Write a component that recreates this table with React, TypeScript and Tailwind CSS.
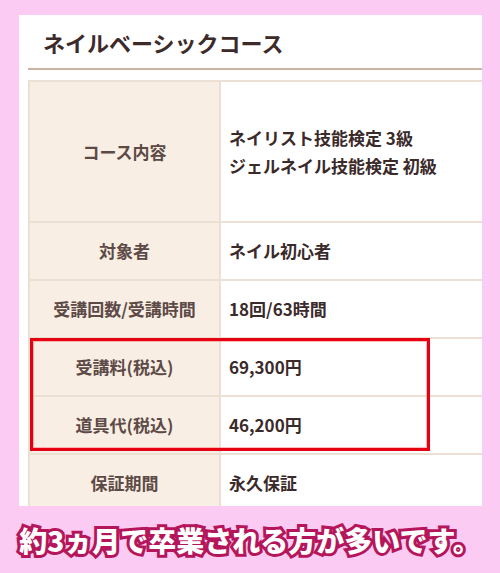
import React from 'react';

const rows = [
  { label: '対象者', value: 'ネイル初心者' },
  { label: '受講回数/受講時間', value: '18回/63時間' },
];

const priceRows = [
  { label: '受講料(税込)', value: '69,300円' },
  { label: '道具代(税込)', value: '46,200円' },
];

function Row({ label, value, h = 'h-[58px]' }: { label: string; value: React.ReactNode; h?: string }) {
  return (
    <div className={`grid grid-cols-[191px_1fr] border-t-2 border-[#ebe0d3] ${h}`}>
      <div className="flex items-center justify-center bg-[#f8eee3] border-r-2 border-[#ebe0d3] text-[17px] font-bold text-[#5d4a47]">
        {label}
      </div>
      <div className="flex items-center pl-[8px] text-[17px] font-bold text-[#3b2a2a]">{value}</div>
    </div>
  );
}

export default function App() {
  return (
    <div
      className="w-[500px] h-[573px] bg-[#fccbf3] overflow-hidden"
      style={{ fontFamily: '"Noto Sans CJK JP", "Noto Sans", sans-serif' }}
    >
      {/* 白いパネル */}
      <div className="ml-[19px] mt-[15px] w-[463px] h-[491px] bg-white overflow-hidden">
        <div className="h-[53px] flex items-center pl-[24px] pt-[1px] text-[22px] font-bold text-[#3d2b2b]">
          ネイルベーシックコース
        </div>
        <div className="ml-[9px] h-[2px] bg-[#cdb3a1]" />
        <div className="ml-[9px] mt-[10px] border-l-2 border-[#ebe0d3]">
          <Row
            h="h-[141px]"
            label="コース内容"
            value={
              <div className="leading-[28px]">
                <div>ネイリスト技能検定 3級</div>
                <div>ジェルネイル技能検定 初級</div>
              </div>
            }
          />
          {rows.map((r) => (
            <Row key={r.label} label={r.label} value={r.value} />
          ))}
          <div className="relative">
            {priceRows.map((r) => (
              <Row key={r.label} label={r.label} value={r.value} />
            ))}
            {/* 赤枠 */}
            <div className="absolute left-0 top-[1px] w-[400px] h-[113px] border-[3px] border-[#e50012] shadow-[inset_0_0_0_1px_rgba(255,120,120,0.5)]" />
          </div>
          <Row label="保証期間" value="永久保証" />
        </div>
      </div>

      {/* キャプション */}
      <div className="h-[67px] flex items-center justify-center">
        <span
          className="text-[28px] font-black text-white [paint-order:stroke_fill] [-webkit-text-stroke:6px_#b5155a]"
        >
          約3ヵ月で卒業される方が多いです。
        </span>
      </div>
    </div>
  );
}
